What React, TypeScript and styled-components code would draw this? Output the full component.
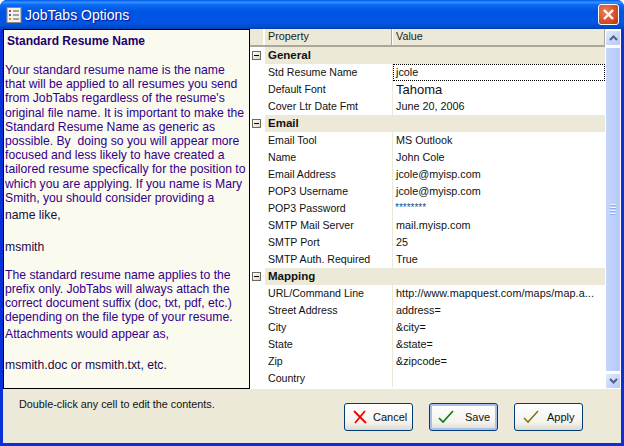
import React from "react";
import styled, { createGlobalStyle } from "styled-components";

const Global = createGlobalStyle`
  html, body { margin: 0; padding: 0; background: #fff; }
  * { box-sizing: border-box; }
`;

const Window = styled.div`
  width: 624px; height: 446px; display: flex; flex-direction: column;
  font-family: "Liberation Sans", Arial, sans-serif; overflow: hidden;
  background: #0831d9;
  border-radius: 7px 7px 0 0;
`;
const TitleBar = styled.div`
  height: 29px; flex: none; display: flex; align-items: center; padding: 0 5px 0 6px;
  background: linear-gradient(180deg, #0058ee 0%, #3593ff 8%, #0a6af2 16%, #0054e3 40%, #0055e5 80%, #0048c8 94%, #003dac 100%);
`;
const TitleText = styled.div`
  flex: 1; margin-left: 3px; color: #fff; font: 400 14px "Liberation Sans", sans-serif;
  text-shadow: 1px 1px 1px #0f1089;
`;
const CloseBtn = styled.div`
  width: 21px; height: 21px; border: 1px solid #fff; border-radius: 3px; display: flex;
  align-items: center; justify-content: center;
  background: radial-gradient(circle at 35% 35%, #e9845f 0%, #d9512c 55%, #b92f10 100%);
`;
const Body = styled.div`
  flex: 1; display: flex; flex-direction: column; background: #ece9d8;
  margin: 0 3px 3px; min-height: 0;
`;
const Main = styled.div`
  height: 360px; flex: none; display: flex;
`;
const Help = styled.div`
  width: 247px; flex: none; background: #fbfaef; border: 1px solid #000;
  color: #32008c; font-size: 12.2px; line-height: 14.2px; padding: 4px 0 0 1px; overflow: hidden;
`;
const HelpTitle = styled.div`
  font-weight: 700; font-size: 12px; padding-left: 2px; color: #1c0070;
`;
const HelpLine = styled.div<{ $gap?: number; $dark?: boolean }>`
  white-space: pre;
  margin-top: ${p => p.$gap ?? 0}px;
  ${p => p.$dark ? "color: #1a0a4a;" : ""}
`;
const Grid = styled.div`
  flex: 1; display: flex; flex-direction: column; min-width: 0; background: #fff;
`;
const HeaderRow = styled.div`
  height: 18px; flex: none; display: flex; background: #ece9d8; border-bottom: 2px solid #aca899;
  font-size: 10.8px; color: #222; 
`;
const HeaderGutter = styled.div` width: 14px; flex: none; border-right: 1px solid #fff; `;
const HeaderCell = styled.div<{ $w?: number }>`
  ${p => p.$w ? `width:${p.$w}px;flex:none;` : "flex:1;"}
  padding: 1px 0 0 4px; border-right: 1px solid #aca899; box-shadow: inset 1px 0 0 #fff;
`;
const Row = styled.div`
  height: 17px; flex: none; display: flex; font-size: 10.6px; color: #111; line-height: 17px;
`;
const Gutter = styled.div` width: 15px; flex: none; background: #fff; display:flex; align-items:center; padding-left: 2px;`;
const Prop = styled.div`
  width: 128px; flex: none; padding-left: 3px; border-right: 1px solid #ece9d8; white-space: nowrap; overflow: hidden;
`;
const Val = styled.div<{ $focus?: boolean; $big?: boolean; $stars?: boolean; $wide?: boolean }>`
  flex: 1; min-width: 0; padding-left: 3px; white-space: nowrap; overflow: hidden; font-size: 10.8px;
  ${p => p.$focus ? "outline: 1px dotted #000; outline-offset: -1px; padding-left: 3px;" : ""}
  ${p => p.$big ? "font-size: 13px; padding-left: 3px;" : ""}
  ${p => p.$stars ? "color: #1a4fa0; font-size: 10px; padding-left: 2px; line-height: 15px;" : ""}
  ${p => p.$wide ? "letter-spacing: 0.08px;" : ""}
`;
const GroupName = styled.div`
  flex: 1; background: #ece9d8; font-weight: 700; font-size: 11.5px; padding-left: 3px; color: #111;
`;
const Collapse = styled.div`
  width: 9px; height: 9px; border: 1px solid #6b6b60; display: flex; align-items: center; justify-content: center;
  background: linear-gradient(135deg, #fff, #d9d5c4);
  &::before { content: ""; width: 5px; height: 1px; background: #000; }
`;
const Rows = styled.div` flex: 1; overflow: hidden; `;
const Scroll = styled.div`
  width: 16px; flex: none; display: flex; flex-direction: column; background: #fdfdf8; padding: 1px 0 0 0; gap: 1px;
`;
const ScrollBtn = styled.div`
  height: 16px; flex: none; border: 1px solid #fff; border-radius: 2px;
  background: linear-gradient(135deg, #e1eafe, #b4c8f6);
  display: flex; align-items: center; justify-content: center;
`;
const Thumb = styled.div`
  flex: 1; border: 1px solid #fff; border-radius: 2px;
  background: linear-gradient(90deg, #c5d5fc, #b4c9fa);
  display: flex; flex-direction: column; align-items: center; justify-content: center; gap: 1px;
`;
const Grip = styled.div` width: 6px; height: 1px; background: #eef4fe; box-shadow: 0 1px 0 #8cb0f8; margin-bottom: 1px; `;
const Footer = styled.div`
  flex: 1; display: flex; justify-content: space-between; padding: 8px 38px 0 16px;
`;
const Hint = styled.div` font-size: 10.8px; color: #111; line-height: 13px; padding-top: 1px; `;
const Buttons = styled.div` display: flex; gap: 16px; margin-top: 6px; align-self: flex-start; `;
const Btn = styled.div<{ $def?: boolean }>`
  width: 69px; height: 28px; border: 1px solid #003c74; border-radius: 3px;
  background: linear-gradient(180deg, #fff 0%, #f4f3ee 70%, #dcd8cc 100%);
  display: flex; align-items: center; font-size: 11px; color: #111;
  ${p => p.$def ? "box-shadow: inset 0 0 0 2px #a9bfee;" : ""}
`;
const BtnIcon = styled.svg` margin-left: 8px; flex: none; `;
const BtnLabel = styled.span<{ $ml: number }>` margin-left: ${p => p.$ml}px; `;

const rows: any[] = [
  { g: "General" },
  { p: "Std Resume Name", v: "jcole", focus: true },
  { p: "Default Font", v: "Tahoma", big: true },
  { p: "Cover Ltr Date Fmt", v: "June 20, 2006" },
  { g: "Email" },
  { p: "Email Tool", v: "MS Outlook" },
  { p: "Name", v: "John Cole" },
  { p: "Email Address", v: "jcole@myisp.com" },
  { p: "POP3 Username", v: "jcole@myisp.com" },
  { p: "POP3 Password", v: "********", stars: true },
  { p: "SMTP Mail Server", v: "mail.myisp.com" },
  { p: "SMTP Port", v: "25" },
  { p: "SMTP Auth. Required", v: "True" },
  { g: "Mapping" },
  { p: "URL/Command Line", v: "http://www.mapquest.com/maps/map.a...", wide: true },
  { p: "Street Address", v: "address=" },
  { p: "City", v: "&city=" },
  { p: "State", v: "&state=" },
  { p: "Zip", v: "&zipcode=" },
  { p: "Country", v: "" },
];

const helpLines: { t: string; gap?: number; dark?: boolean }[] = [
  { t: "Your standard resume name is the name", gap: 14.8 },
  { t: "that will be applied to all resumes you send" },
  { t: "from JobTabs regardless of the resume's" },
  { t: "original file name. It is important to make the" },
  { t: "Standard Resume Name as generic as" },
  { t: "possible. By  doing so you will appear more" },
  { t: "focused and less likely to have created a" },
  { t: "tailored resume specfically for the position to" },
  { t: "which you are applying. If you name is Mary" },
  { t: "Smith, you should consider providing a" },
  { t: "name like,", gap: 2.8, dark: true },
  { t: "msmith", gap: 17.8, dark: true },
  { t: "The standard resume name applies to the", gap: 13.8 },
  { t: "prefix only. JobTabs will always attach the" },
  { t: "correct document suffix (doc, txt, pdf, etc.)" },
  { t: "depending on the file type of your resume." },
  { t: "Attachments would appear as,", gap: 2.8 },
  { t: "msmith.doc or msmith.txt, etc.", gap: 16.8, dark: true },
];

const Arrow = ({ up }: { up?: boolean }) => (
  <svg width="9" height="6" viewBox="0 0 9 6">
    <path d={up ? "M1 5 L4.5 1.5 L8 5" : "M1 1 L4.5 4.5 L8 1"} fill="none" stroke="#4d6185" strokeWidth="2" />
  </svg>
);

export default function App() {
  return (
    <Window>
      <Global />
      <TitleBar>
        <svg width="16" height="16" viewBox="0 0 16 16">
          <rect x="1" y="0.5" width="14" height="15" fill="#f4f2ea" stroke="#8a8a80" />
          <rect x="3" y="3" width="2" height="2" fill="#d04030" />
          <rect x="3" y="7" width="2" height="2" fill="#3060c0" />
          <rect x="3" y="11" width="2" height="2" fill="#d09020" />
          <path d="M7 4h6M7 8h6M7 12h6" stroke="#555" />
        </svg>
        <TitleText>JobTabs Options</TitleText>
        <CloseBtn>
          <svg width="13" height="13" viewBox="0 0 13 13">
            <path d="M2 2 L11 11 M11 2 L2 11" stroke="#fff" strokeWidth="2.4" />
          </svg>
        </CloseBtn>
      </TitleBar>
      <Body>
        <Main>
          <Help>
            <HelpTitle>Standard Resume Name</HelpTitle>
            {helpLines.map((l, i) => (
              <HelpLine key={i} $gap={l.gap} $dark={l.dark}>{l.t}</HelpLine>
            ))}
          </Help>
          <Grid>
            <HeaderRow>
              <HeaderGutter />
              <HeaderCell $w={128}>Property</HeaderCell>
              <HeaderCell>Value</HeaderCell>
            </HeaderRow>
            <Rows>
              {rows.map((r, i) => r.g ? (
                <Row key={i}><Gutter><Collapse /></Gutter><GroupName>{r.g}</GroupName></Row>
              ) : (
                <Row key={i}>
                  <Gutter />
                  <Prop>{r.p}</Prop>
                  <Val $focus={r.focus} $big={r.big} $stars={r.stars} $wide={r.wide}>{r.v}</Val>
                </Row>
              ))}
            </Rows>
          </Grid>
          <Scroll>
            <ScrollBtn><Arrow up /></ScrollBtn>
            <Thumb><Grip /><Grip /><Grip /><Grip /></Thumb>
            <ScrollBtn><Arrow /></ScrollBtn>
          </Scroll>
        </Main>
        <Footer>
          <Hint>Double-click any cell to edit the contents.</Hint>
          <Buttons>
            <Btn>
              <BtnIcon width="14" height="14" viewBox="0 0 14 14"><path d="M1 1 L13 13 M12 1 L2 13" stroke="#f00000" strokeWidth="1.8" fill="none" /></BtnIcon>
              <BtnLabel $ml={6}>Cancel</BtnLabel>
            </Btn>
            <Btn $def>
              <BtnIcon width="16" height="14" viewBox="0 0 16 14"><path d="M1 8 L5 12 L15 1" stroke="#0a7a0a" strokeWidth="1.6" fill="none" /></BtnIcon>
              <BtnLabel $ml={11}>Save</BtnLabel>
            </Btn>
            <Btn>
              <BtnIcon width="16" height="14" viewBox="0 0 16 14"><path d="M1 8 L5 12 L15 1" stroke="#807a10" strokeWidth="1.6" fill="none" /></BtnIcon>
              <BtnLabel $ml={8}>Apply</BtnLabel>
            </Btn>
          </Buttons>
        </Footer>
      </Body>
    </Window>
  );
}
